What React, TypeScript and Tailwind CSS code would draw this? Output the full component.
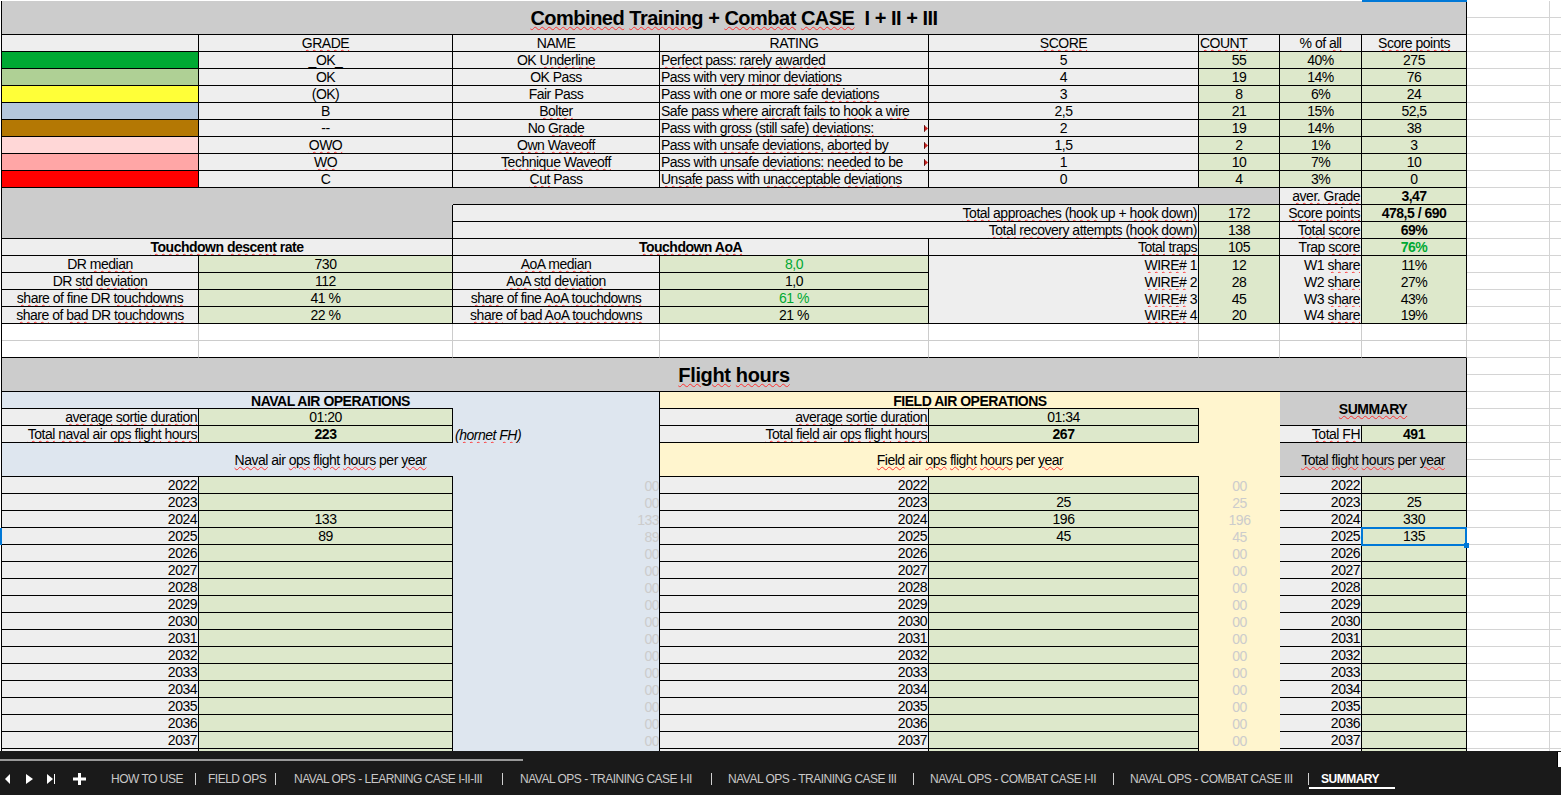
import React from "react";

// words starting with ~ (or (~) get the spell check squiggle
function Sq({ text }: { text: string }) {
  const parts = text.split(/( +)/);
  return (
    <span className="whitespace-pre">
      {parts.map((p, i) => {
        const m = p.match(/^(\(?)~(.*)$/);
        if (!m) return <span key={i}>{p}</span>;
        return (
          <React.Fragment key={i}>
            {m[1]}
            <span className="underline decoration-wavy decoration-[#ff3030] decoration-[length:1.4px] underline-offset-1">
              {m[2]}
            </span>
          </React.Fragment>
        );
      })}
    </span>
  );
}

interface CellProps {
  className?: string;
  text?: string;
  children?: React.ReactNode;
}

function Cell({ className = "", text, children }: CellProps) {
  const align = className.includes("items-center") ? "" : "items-end";
  return (
    <div className={`relative flex overflow-hidden whitespace-nowrap leading-[16px] ${align} ${className}`}>
      {text !== undefined && <Sq text={text} />}
      {children}
    </div>
  );
}

const base = "border-r border-b border-black";
const gray = `${base} bg-[#eeeeee]`;
const green = `${base} bg-[#dde8cb] justify-center`;
const center = `${gray} justify-center`;
const right = `${gray} justify-end pr-px`;
const left = `${gray} justify-start pl-px`;
const head = "bg-[#cccccc] justify-center";

const grades = [
  { color: "bg-[#00a933]", grade: "_OK_", name: "OK ~Underline", rating: "~Perfect pass: ~rarely ~awarded", score: "5", count: "55", pct: "40%", pts: "275" },
  { color: "bg-[#afd095]", grade: "OK", name: "OK Pass", rating: "Pass with ~very ~minor ~deviations", score: "4", count: "19", pct: "14%", pts: "76" },
  { color: "bg-[#ffff38]", grade: "(OK)", name: "Fair Pass", rating: "Pass with one or more safe ~deviations", score: "3", count: "8", pct: "6%", pts: "24" },
  { color: "bg-[#b4c7dc]", grade: "B", name: "~Bolter", rating: "Safe pass ~where ~aircraft ~fails to ~hook a ~wire", score: "2,5", count: "21", pct: "15%", pts: "52,5" },
  { color: "bg-[#b47804]", grade: "--", name: "No ~Grade", rating: "Pass with ~gross (~still safe) ~deviations:", score: "2", count: "19", pct: "14%", pts: "38", note: true },
  { color: "bg-[#ffd7d7]", grade: "~OWO", name: "~Own ~Waveoff", rating: "Pass with ~unsafe ~deviations, ~aborted by", score: "1,5", count: "2", pct: "1%", pts: "3", note: true },
  { color: "bg-[#ffa6a6]", grade: "~WO", name: "~Technique ~Waveoff", rating: "Pass with ~unsafe ~deviations: ~needed to be", score: "1", count: "10", pct: "7%", pts: "10", note: true },
  { color: "bg-[#ff0000]", grade: "C", name: "~Cut Pass", rating: "~Unsafe pass with ~unacceptable ~deviations", score: "0", count: "4", pct: "3%", pts: "0" },
];

const touchdown = [
  { dr: "DR ~median", drv: "730", aoa: "~AoA ~median", aoav: "8,0", good: true, wire: "~WIRE# 1", n: "12", w: "W1 ~share", wv: "11%" },
  { dr: "DR ~std ~deviation", drv: "112", aoa: "~AoA ~std ~deviation", aoav: "1,0", good: false, wire: "~WIRE# 2", n: "28", w: "W2 ~share", wv: "27%" },
  { dr: "~share of fine DR ~touchdowns", drv: "41 %", aoa: "~share of fine ~AoA ~touchdowns", aoav: "61 %", good: true, wire: "~WIRE# 3", n: "45", w: "W3 ~share", wv: "43%" },
  { dr: "~share of ~bad DR ~touchdowns", drv: "22 %", aoa: "~share of ~bad ~AoA ~touchdowns", aoav: "21 %", good: false, wire: "~WIRE# 4", n: "20", w: "W4 ~share", wv: "19%" },
];

const years = Array.from({ length: 16 }, (_, i) => 2022 + i);
const naval: Record<number, string> = { 2024: "133", 2025: "89" };
const field: Record<number, string> = { 2023: "25", 2024: "196", 2025: "45" };
const total: Record<number, string> = { 2023: "25", 2024: "330", 2025: "135" };

const topLine = "shadow-[0_-1px_0_#000]";
const leftLine = "shadow-[-1px_0_0_#000]";

function Sheet() {
  return (
    <div className="ml-px grid shrink-0 grid-cols-[197px_254px_207px_269px_270px_81px_82px_105px] auto-rows-[17px] border-l border-black">
      <Cell className={`col-span-8 row-span-2 ${base} ${head} items-center text-[20px] font-bold tracking-[-0.5px]`} text="~Combined ~Training + ~Combat ~CASE  I + II + III" />

      <Cell className={center} />
      <Cell className={center} text="~GRADE" />
      <Cell className={center} text="NAME" />
      <Cell className={center} text="RATING" />
      <Cell className={center} text="~SCORE" />
      <Cell className={left} text="~COUNT" />
      <Cell className={center} text="% of ~all" />
      <Cell className={center} text="~Score ~points" />

      {grades.map((g) => (
        <React.Fragment key={g.name}>
          <Cell className={`${base} ${g.color}`} />
          <Cell className={center} text={g.grade} />
          <Cell className={center} text={g.name} />
          <Cell className={left} text={g.rating}>
            {g.note && (
              <svg className="absolute right-0 top-[5px]" width="4" height="7" viewBox="0 0 4 7">
                <path d="M0 0 L4 3.5 L0 7 Z" fill="#c9211e" />
                <path d="M0 0 V7" stroke="#000" strokeWidth="1" />
              </svg>
            )}
          </Cell>
          <Cell className={center} text={g.score} />
          <Cell className={green} text={g.count} />
          <Cell className={green} text={g.pct} />
          <Cell className={green} text={g.pts} />
        </React.Fragment>
      ))}

      <Cell className="col-span-2 row-span-3 border-b border-black bg-[#cccccc]" />
      <Cell className={`col-span-4 ${base} bg-[#cccccc]`} />
      <Cell className={right} text="~aver. ~Grade" />
      <Cell className={`${green} font-bold`} text="3,47" />

      <Cell className={`col-span-3 ${right} ${leftLine}`} text="~Total ~approaches (~hook up + ~hook ~down)" />
      <Cell className={green} text="172" />
      <Cell className={right} text="~Score ~points" />
      <Cell className={`${green} font-bold`} text="478,5 / 690" />

      <Cell className={`col-span-3 ${right} ${leftLine}`} text="~Total ~recovery ~attempts (~hook ~down)" />
      <Cell className={green} text="138" />
      <Cell className={right} text="~Total ~score" />
      <Cell className={`${green} font-bold`} text="69%" />

      <Cell className={`col-span-2 ${center} font-bold`} text="~Touchdown ~descent rate" />
      <Cell className={`col-span-2 ${center} font-bold`} text="~Touchdown ~AoA" />
      <Cell className={right} text="~Total ~traps" />
      <Cell className={green} text="105" />
      <Cell className={right} text="Trap ~score" />
      <Cell className={`${green} font-bold text-[#00a933]`} text="76%" />

      {touchdown.map((t, i) => {
        const last = i === touchdown.length - 1 ? "border-b border-black" : "";
        return (
          <React.Fragment key={t.wire}>
            <Cell className={center} text={t.dr} />
            <Cell className={green} text={t.drv} />
            <Cell className={center} text={t.aoa} />
            <Cell className={`${green} ${t.good ? "text-[#00a933]" : ""}`} text={t.aoav} />
            <Cell className={`border-r border-black bg-[#eeeeee] justify-end pr-px ${last}`} text={t.wire} />
            <Cell className={`border-r border-black bg-[#dde8cb] justify-center ${last}`} text={t.n} />
            <Cell className={`border-r border-black bg-[#eeeeee] justify-end pr-px ${last}`} text={t.w} />
            <Cell className={`border-r border-black bg-[#dde8cb] justify-center ${last}`} text={t.wv} />
          </React.Fragment>
        );
      })}

      {Array.from({ length: 8 }).map((_, i) => (
        <div key={i} className="border-r border-b border-[#cccccc]" />
      ))}
      {Array.from({ length: 8 }).map((_, i) => (
        <div key={i} className="border-r border-b border-r-[#cccccc] border-b-black" />
      ))}

      <Cell className={`col-span-8 row-span-2 ${base} ${head} items-center text-[20px] font-bold tracking-[-0.35px]`} text="~Flight ~hours" />

      <Cell className="col-span-3 border-r border-black bg-[#dee6ef] justify-center font-bold" text="~NAVAL AIR ~OPERATIONS" />
      <Cell className="col-span-3 bg-[#fff5ce] justify-center font-bold" text="~FIELD AIR ~OPERATIONS" />
      <Cell className={`col-span-2 row-span-2 ${base} ${head} items-center font-bold`} text="~SUMMARY" />

      <Cell className={`${right} ${topLine}`} text="~average ~sortie ~duration" />
      <Cell className={`${green} ${topLine}`} text="01:20" />
      <Cell className="row-span-2 border-r border-black bg-[#dee6ef] pl-[2px] italic" text="(~hornet ~FH)" />
      <Cell className={`${right} ${topLine}`} text="~average ~sortie ~duration" />
      <Cell className={`${green} ${topLine}`} text="01:34" />
      <Cell className="row-span-2 bg-[#fff5ce]" />

      <Cell className={right} text="~Total ~naval air ~ops ~flight ~hours" />
      <Cell className={`${green} font-bold`} text="223" />
      <Cell className={right} text="~Total ~field air ~ops ~flight ~hours" />
      <Cell className={`${green} font-bold`} text="267" />
      <Cell className={right} text="~Total ~FH" />
      <Cell className={`${green} font-bold`} text="491" />

      <Cell className="col-span-3 row-span-2 items-center justify-center border-r border-black bg-[#dee6ef]" text="~Naval air ~ops ~flight ~hours per ~year" />
      <Cell className="col-span-3 row-span-2 items-center justify-center bg-[#fff5ce]" text="~Field air ~ops ~flight ~hours per ~year" />
      <Cell className={`col-span-2 row-span-2 ${base} ${head} items-center`} text="~Total ~flight ~hours per ~year" />

      {years.map((y, i) => {
        const line = i === 0 ? topLine : "";
        return (
          <React.Fragment key={y}>
            <Cell className={`${right} ${line}`} text={String(y)} />
            <Cell className={`${green} ${line}`} text={naval[y] ?? ""} />
            <Cell className="justify-end border-r border-black bg-[#dee6ef] text-[#cccccc]" text={naval[y] ?? "00"} />
            <Cell className={`${right} ${line}`} text={String(y)} />
            <Cell className={`${green} ${line}`} text={field[y] ?? ""} />
            <Cell className="justify-center bg-[#fff5ce] text-[#cccccc]" text={field[y] ?? "00"} />
            <Cell className={`${right} ${line}`} text={String(y)} />
            <Cell className={`${green} ${line}`} text={total[y] ?? ""} />
          </React.Fragment>
        );
      })}

      {/* next row only peeks out above the tab bar */}
      <Cell className={right} />
      <Cell className={green} />
      <Cell className="border-r border-black bg-[#dee6ef]" />
      <Cell className={right} />
      <Cell className={green} />
      <Cell className="bg-[#fff5ce]" />
      <Cell className={right} />
      <Cell className={green} />
    </div>
  );
}

function EmptyColumns() {
  return (
    <div className="grid min-w-0 flex-1 grid-cols-[83px_1fr] auto-rows-[17px]">
      {Array.from({ length: 90 }).map((_, i) => (
        <div key={i} className={`border-b border-[#d4d4d4] ${i % 2 === 0 ? "border-r" : ""}`} />
      ))}
    </div>
  );
}

const tabs = [
  { label: "HOW TO USE", cls: "w-[84px]", sep: "mr-[12px]" },
  { label: "FIELD OPS", cls: "w-[67px]", sep: "mr-[18px]" },
  { label: "NAVAL OPS - LEARNING CASE I-II-III", cls: "w-[208px]", sep: "mr-[17px]" },
  { label: "NAVAL OPS - TRAINING CASE I-II", cls: "w-[191px]", sep: "mr-[16px]" },
  { label: "NAVAL OPS - TRAINING CASE III", cls: "w-[185px]", sep: "mr-[16px]" },
  { label: "NAVAL OPS - COMBAT CASE I-II", cls: "w-[183px]", sep: "mr-[16px]" },
  { label: "NAVAL OPS - COMBAT CASE III", cls: "w-[178px]", sep: "mr-[12px]" },
];

function TabBar() {
  return (
    <div className="relative h-[44px] shrink-0 bg-[#1a1a1a]">
      <div className="mt-[8px] h-[2px] w-[523px] bg-[#999999]" />
      <div className="mt-[11px] flex h-[14px] items-center">
        <svg className="ml-[5px] shrink-0" width="82" height="14" viewBox="0 0 82 14" fill="#ffffff">
          <path d="M5 2 L0 7 L5 12 Z" />
          <path d="M21 2 L28 7 L21 12 Z" />
          <path d="M42 2 L48 7 L42 12 Z" />
          <rect x="49" y="2" width="1" height="10" />
          <rect x="68" y="5.5" width="13" height="3" />
          <rect x="73" y="1" width="3" height="12" />
        </svg>
        <div className="ml-[24px] flex items-center text-[12px] tracking-[-0.5px] text-[#c8c8c8]">
          {tabs.map((t) => (
            <React.Fragment key={t.label}>
              <span className={`${t.cls} whitespace-nowrap`}>{t.label}</span>
              <span className={`h-[12px] w-px bg-[#d0d0d0] ${t.sep}`} />
            </React.Fragment>
          ))}
          <span className="font-bold text-white">SUMMARY</span>
        </div>
      </div>
      <div className="absolute left-[1309px] top-[36px] h-[2px] w-[86px] bg-white" />
      <div className="absolute right-0 top-[1px] h-[15px] w-[4px] border-l border-black bg-white" />
    </div>
  );
}

export default function App() {
  return (
    <div className="flex h-[795px] w-full flex-col overflow-hidden bg-white font-['Liberation_Sans',Arial,sans-serif] text-[14px] tracking-[-0.5px] text-black">
      <div className="relative flex min-h-0 flex-1 overflow-hidden pt-px">
        <Sheet />
        <EmptyColumns />
        {/* selected column / row / cell markers */}
        <div className="absolute left-[1362px] top-0 h-[2px] w-[105px] bg-[#0078d7]" />
        <div className="absolute left-0 top-[528px] h-[17px] w-[2px] bg-[#0078d7]" />
        <div className="absolute left-[1361px] top-[527px] h-[19px] w-[106px] border-2 border-[#0078d7]" />
        <div className="absolute left-[1464px] top-[543px] h-[5px] w-[5px] bg-[#0078d7]" />
      </div>
      <TabBar />
    </div>
  );
}
